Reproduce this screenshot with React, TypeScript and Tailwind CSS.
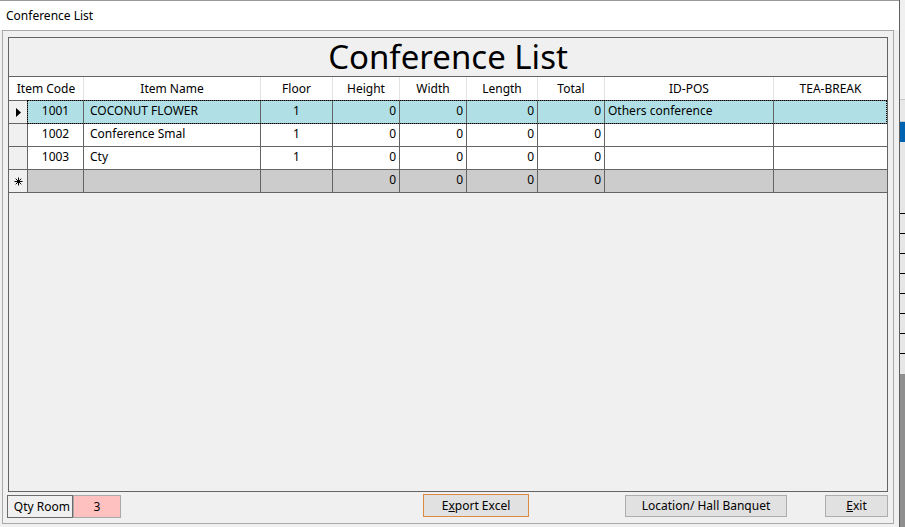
import React from "react";

type Row = {
  code: string;
  name: string;
  floor: string;
  height: string;
  width: string;
  length: string;
  total: string;
  pos: string;
  tea: string;
};

const rows: Row[] = [
  { code: "1001", name: "COCONUT FLOWER", floor: "1", height: "0", width: "0", length: "0", total: "0", pos: "Others conference", tea: "" },
  { code: "1002", name: "Conference Smal", floor: "1", height: "0", width: "0", length: "0", total: "0", pos: "", tea: "" },
  { code: "1003", name: "Cty", floor: "1", height: "0", width: "0", length: "0", total: "0", pos: "", tea: "" },
];

function Arrow() {
  return (
    <svg width="5" height="9" viewBox="0 0 5 9">
      <path d="M0 0 L5 4.5 L0 9 Z" fill="#000" />
    </svg>
  );
}

function Star() {
  return (
    <svg width="9" height="9" viewBox="0 0 9 9" stroke="#000" strokeWidth="1">
      <path d="M4.5 0.5 V8.5 M0.5 4.5 H8.5 M1.7 1.7 L7.3 7.3 M7.3 1.7 L1.7 7.3" />
    </svg>
  );
}

function DataCells({ r, bg }: { r: Row; bg: string }) {
  const cell = `h-full border-r border-b border-[#646464] flex items-center pb-[2px] ${bg}`;
  return (
    <>
      <div className={`${cell} w-[56px] justify-center`}>{r.code}</div>
      <div className={`${cell} w-[177px] pl-[6px]`}>{r.name}</div>
      <div className={`${cell} w-[72px] justify-center`}>{r.floor}</div>
      <div className={`${cell} w-[67px] justify-end pr-[3px]`}>{r.height}</div>
      <div className={`${cell} w-[67px] justify-end pr-[3px]`}>{r.width}</div>
      <div className={`${cell} w-[71px] justify-end pr-[3px]`}>{r.length}</div>
      <div className={`${cell} w-[67px] justify-end pr-[3px]`}>{r.total}</div>
      <div className={`${cell} w-[169px] pl-[3px]`}>{r.pos}</div>
      <div className={`h-full border-b border-[#646464] flex items-center w-[113px] ${bg}`}>{r.tea}</div>
    </>
  );
}

export default function App() {
  const head = "h-full flex items-center justify-center border-r border-[#e3e3e3]";
  return (
    <div className="flex w-[905px] h-[527px] font-['Noto_Sans',sans-serif] text-[12px] text-black bg-[#f0f0f0]">
      {/* window */}
      <div className="flex flex-col w-[900px] h-full border-r border-[#5f5f5f]">
        <div className="h-px bg-[#9a9a9a]" />
        <div className="h-[29px] bg-white flex items-center pl-[6px]">Conference List</div>

        <div className="flex-1 bg-[#f0f0f0] pl-[2px] pr-[5px] pb-[3px] flex flex-col">
          <div className="flex-1 border border-[#a9a9a9] pt-[6px] px-[5px] flex flex-col">
            {/* grid */}
            <div className="h-[455px] border border-[#646464] bg-[#f0f0f0] flex flex-col">
              <div className="h-[39px] border-b border-[#646464] flex items-center justify-center text-[33px] leading-none pb-[1px]">
                Conference List
              </div>
              <div className="h-[24px] flex bg-white border-b border-[#646464]">
                <div className={`${head} w-[75px]`}>Item Code</div>
                <div className={`${head} w-[177px]`}>Item Name</div>
                <div className={`${head} w-[72px]`}>Floor</div>
                <div className={`${head} w-[67px]`}>Height</div>
                <div className={`${head} w-[67px]`}>Width</div>
                <div className={`${head} w-[71px]`}>Length</div>
                <div className={`${head} w-[67px]`}>Total</div>
                <div className={`${head} w-[169px]`}>ID-POS</div>
                <div className="h-full flex items-center justify-center w-[113px]">TEA-BREAK</div>
              </div>

              {rows.map((r, i) => (
                <div key={r.code} className="h-[23px] flex">
                  <div className="w-[19px] h-full bg-[#f0f0f0] border-r border-b border-[#646464] flex items-center justify-center pl-[1px]">
                    {i === 0 && <Arrow />}
                  </div>
                  <div className="relative flex h-full">
                    <DataCells r={r} bg={i === 0 ? "bg-[#b0e0e6]" : "bg-white"} />
                    {i === 0 && (
                      <div className="absolute -top-px -left-px right-0 bottom-0 border border-dotted border-black pointer-events-none" />
                    )}
                  </div>
                </div>
              ))}

              <div className="h-[23px] flex">
                <div className="w-[19px] h-full bg-[#f0f0f0] border-r border-b border-[#646464] flex items-center justify-center">
                  <Star />
                </div>
                <DataCells
                  r={{ code: "", name: "", floor: "", height: "0", width: "0", length: "0", total: "0", pos: "", tea: "" }}
                  bg="bg-[#cccccc]"
                />
              </div>
            </div>

            {/* bottom bar */}
            <div className="flex-1 flex items-start">
              <div className="mt-[3px] ml-[-1px] w-[66px] h-[23px] border border-[#6b6b6b] flex items-center justify-end pr-[2px]">
                Qty Room
              </div>
              <div className="mt-[3px] w-[48px] h-[23px] border border-[#a9a9a9] bg-[#ffc0c0] flex items-center justify-center">
                3
              </div>
              <button className="mt-[2px] ml-[302px] w-[106px] h-[23px] border border-[#dc8a42] bg-[#e1e1e1] flex items-center justify-center">
                E<span className="underline">x</span>port Excel
              </button>
              <button className="mt-[3px] ml-[96px] w-[162px] h-[22px] border border-[#adadad] bg-[#e1e1e1] flex items-center justify-center">
                Location/ Hall Banquet
              </button>
              <button className="mt-[3px] ml-[38px] w-[63px] h-[22px] border border-[#adadad] bg-[#e1e1e1] flex items-center justify-center">
                <span className="underline">E</span>xit
              </button>
            </div>
          </div>
        </div>
      </div>

      {/* neighbouring window edge */}
      <div className="flex-1 flex flex-col">
        <div className="h-[100px] bg-[#f0f0f0] border-b border-[#c8c8c8]" />
        <div className="h-[22px] bg-[#e8e8e8] border-b border-[#c8c8c8]" />
        <div className="h-[20px] bg-[#0063b1]" />
        <div className="h-[72px] bg-[#e6e6e6] border-b border-black" />
        {[0, 1, 2, 3, 4, 5, 6].map((k) => (
          <div key={k} className="h-[20px] bg-[#e6e6e6] border-b border-black" />
        ))}
        <div className="h-[20px] bg-[#e6e6e6]" />
        <div className="flex-1 bg-[#8f8f8f]" />
      </div>
    </div>
  );
}
